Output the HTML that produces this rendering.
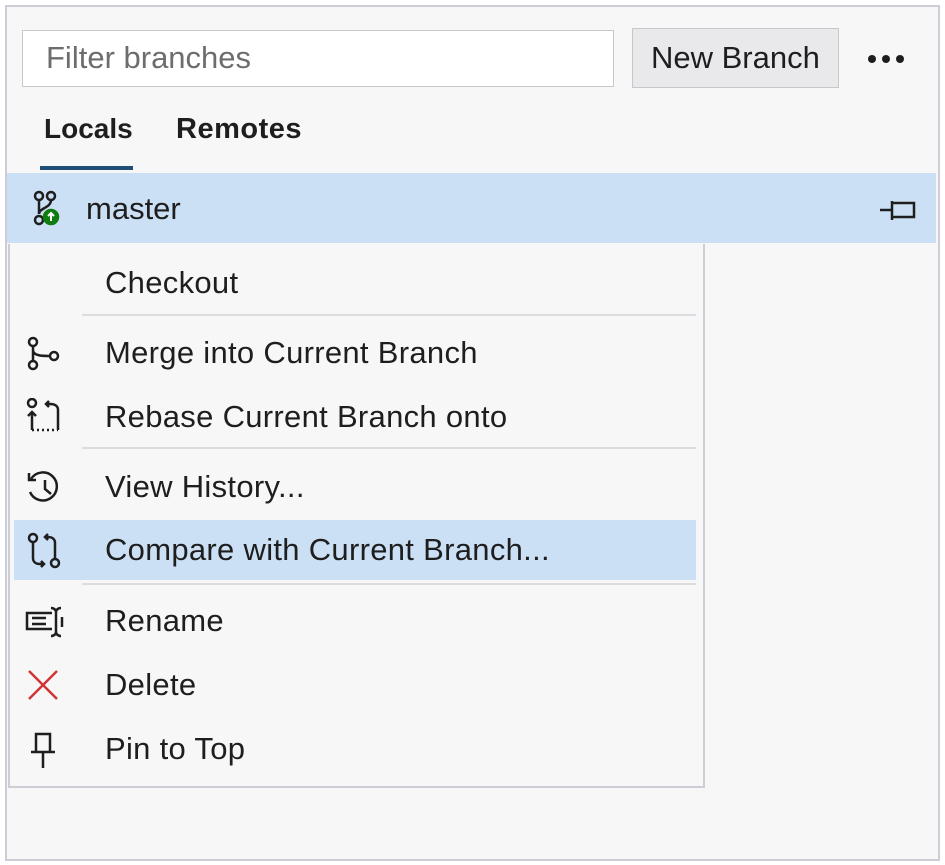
<!DOCTYPE html>
<html><head><style>
body{margin:0;width:945px;height:865px;background:#fff;font-family:"Liberation Sans",sans-serif;position:relative;overflow:hidden}
.abs{position:absolute}
.t{position:absolute;left:105px;font-size:31px;letter-spacing:0.3px;color:#1e1e1e;line-height:30px}
.sep{position:absolute;left:82px;width:614px;height:2px;background:#dcdce0}
svg{position:absolute}
</style></head><body>
<div class="abs" style="left:5px;top:5px;width:931px;height:852px;background:#f7f7f7;border:2px solid #cdcdd8"></div>
<div class="abs" style="left:22px;top:30px;width:590px;height:55px;background:#fff;border:1px solid #c8c8cc"></div>
<div class="abs" style="left:46px;top:40px;font-size:31px;color:#6d6d6d">Filter branches</div>
<div class="abs" style="left:632px;top:28px;width:205px;height:58px;background:#e9e9ec;border:1px solid #c8c8cc"></div>
<div class="abs" style="left:651px;top:40px;font-size:31px;color:#1e1e1e">New Branch</div>
<div class="abs" style="left:868px;top:55px;width:8px;height:8px;border-radius:4px;background:#1e1e1e;box-shadow:14px 0 #1e1e1e,28px 0 #1e1e1e"></div>
<div class="abs" style="left:44px;top:113px;font-size:28px;font-weight:bold;color:#1e1e1e">Locals</div>
<div class="abs" style="left:176px;top:113px;font-size:29px;font-weight:bold;color:#1e1e1e;letter-spacing:0.5px">Remotes</div>
<div class="abs" style="left:40px;top:166px;width:93px;height:4px;background:#1f4e79"></div>
<div class="abs" style="left:7px;top:173px;width:929px;height:70px;background:#cce0f5"></div>
<svg style="left:30px;top:190px" width="42" height="42" viewBox="0 0 42 42" fill="none" stroke="#1e1e1e" stroke-width="2.5"><circle cx="9" cy="6" r="4"/><path d="M9 10v14"/><circle cx="9" cy="30" r="4"/><circle cx="21" cy="6" r="4"/><path d="M21 10c0 8-12 8-12 14"/><circle cx="21" cy="27" r="7" fill="#107c10" stroke="#107c10"/><path d="M21 31v-7M18 26l3-3 3 3" stroke="#fff" stroke-width="2"/></svg>
<div class="abs" style="left:86px;top:191px;font-size:31px;color:#1e1e1e">master</div>
<svg style="left:878px;top:196px" width="42" height="30" viewBox="0 0 42 30" fill="none" stroke="#1e1e1e" stroke-width="2.5"><path d="M2 14h12M14 5v19M14 7h22v14H14"/></svg>
<div class="abs" style="left:8px;top:244px;width:693px;height:542px;background:#f7f7f7;border:2px solid #cdcdd8;border-top:none"></div>
<div class="t" style="top:268px">Checkout</div>
<div class="sep" style="top:314px"></div>
<svg style="left:24px;top:336px" width="40" height="36" viewBox="0 0 40 36" fill="none" stroke="#1e1e1e" stroke-width="2.5"><circle cx="9" cy="6" r="4"/><circle cx="9" cy="29" r="4"/><circle cx="30" cy="20" r="4"/><path d="M9 10v15M9 14c0 6 10 6 17 6"/></svg>
<div class="t" style="top:338px">Merge into Current Branch</div>
<svg style="left:24px;top:398px" width="40" height="36" viewBox="0 0 40 36" fill="none" stroke="#1e1e1e" stroke-width="2.5"><circle cx="8" cy="5" r="4"/><path d="M8 32V14M4 18l4-4 4 4"/><path d="M8 32h26" stroke-dasharray="2 3"/><path d="M34 32V12c0-4-3-6-8-6h-4M25 3l-3 3 3 3"/></svg>
<div class="t" style="top:402px">Rebase Current Branch onto</div>
<div class="sep" style="top:447px"></div>
<svg style="left:24px;top:470px" width="40" height="36" viewBox="0 0 40 36" fill="none" stroke="#1e1e1e" stroke-width="2.5"><path d="M7 9a14 14 0 1 1-1 13"/><path d="M5 3v7h7"/><path d="M21 10v9l6 5"/></svg>
<div class="t" style="top:472px">View History...</div>
<div class="abs" style="left:14px;top:520px;width:682px;height:60px;background:#cce0f5"></div>
<svg style="left:24px;top:532px" width="42" height="38" viewBox="0 0 42 38" fill="none" stroke="#1e1e1e" stroke-width="2.5"><circle cx="9" cy="6" r="4"/><path d="M9 10v16c0 4 3 6 7 6h4M17 29l3 3-3 3"/><circle cx="31" cy="31" r="4"/><path d="M31 27V11c0-4-3-6-7-6h-3M24 2l-3 3 3 3"/></svg>
<div class="t" style="top:535px">Compare with Current Branch...</div>
<div class="sep" style="top:583px"></div>
<svg style="left:24px;top:605px" width="42" height="34" viewBox="0 0 42 34" fill="none" stroke="#1e1e1e" stroke-width="2.5"><path d="M28 8H3v16h25M8 13h14M8 19h14"/><path d="M27 3c3 0 5 2 5 4v20c0 2-2 4-5 4M37 3c-3 0-5 2-5 4v20c0 2 2 4 5 4"/><path d="M38 12v10"/></svg>
<div class="t" style="top:606px">Rename</div>
<svg style="left:26px;top:668px" width="36" height="34" viewBox="0 0 36 34" fill="none" stroke="#d13438" stroke-width="2.5"><path d="M3 3l28 28M31 3L3 31"/></svg>
<div class="t" style="top:670px">Delete</div>
<svg style="left:28px;top:731px" width="32" height="38" viewBox="0 0 32 38" fill="none" stroke="#1e1e1e" stroke-width="2.5"><path d="M8 3h14v18H8zM3 21h24M15 21v16"/></svg>
<div class="t" style="top:734px">Pin to Top</div>
</body></html>
